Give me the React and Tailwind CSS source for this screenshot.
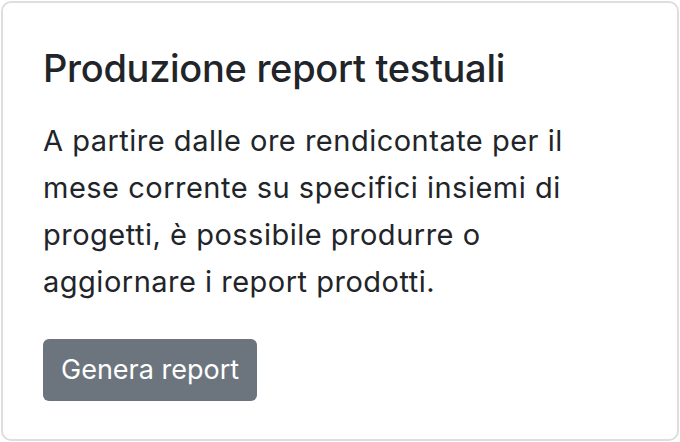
export default function App() {
  return (
    <div className="w-[680px] h-[442px] bg-white p-px" style={{ fontFamily: '"Inter", "Noto Sans", sans-serif' }}>
      <div className="h-full rounded-[10px] border-2 border-[#dedede] bg-white px-10 pt-10 pb-10 flex flex-col">
        <h5 className="text-[38px] font-medium leading-[50px] text-[#212529] mb-[24px] tracking-[-0.3px]">
          Produzione report testuali
        </h5>
        <p className="max-w-[560px] text-[29px] leading-[47px] tracking-[0.5px] text-[#212529] mb-[34px]">
          A partire dalle ore rendicontate per il mese corrente su specifici insiemi di progetti, è possibile produrre o aggiornare i report prodotti.
        </p>
        <div>
          <button className="h-[62px] px-[18px] rounded-[6px] bg-[#6c757d] text-white text-[27px]">
            Genera report
          </button>
        </div>
      </div>
    </div>
  );
}
